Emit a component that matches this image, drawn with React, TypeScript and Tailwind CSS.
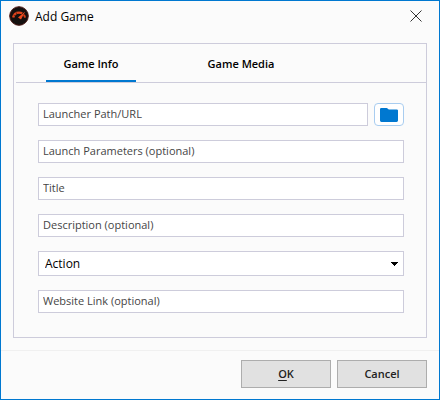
import { useState } from "react";

const tabs = ["Game Info", "Game Media"];

const inputClass =
  "block w-full min-w-0 h-[23px] px-1 pb-0.5 bg-white border border-[#cdccdb] text-[11px] outline-none placeholder:text-[#454545] placeholder:opacity-100";

const footerButtonClass =
  "h-7 w-[90px] border border-[#adadad] bg-[#e1e1e1] text-[11px] font-semibold text-[#222]";

function AppLogo() {
  return (
    <svg width="20" height="20" viewBox="0 0 20 20" fill="none">
      <circle cx="10" cy="10" r="9.3" fill="#14100f" stroke="#4a1613" strokeWidth="1" />
      <path d="M4.2 11.4C4.8 8.4 7.2 6.6 10 6.6c1.3 0 2.3.2 3.2.7" stroke="#e2441c" strokeWidth="2.4" />
      <path d="M14.8 8.8c.7.8 1.1 1.7 1.2 2.8" stroke="#d63d19" strokeWidth="2" />
      <path d="M16.2 5.4l-4.2 8.2-3-2z" fill="#f04a1d" />
      <path d="M7 6.2l1 2.2M4.4 8.8l1.8 1" stroke="#14100f" strokeWidth=".5" />
    </svg>
  );
}

function FolderIcon() {
  return (
    <svg width="18" height="14" viewBox="0 0 18 14" fill="#0078d0">
      <path d="M0 1.2Q0 0 1.2 0H6.6Q7.2 0 7.6.4L8.8 1.4H16.8Q18 1.4 18 2.6V12.6Q18 14 16.6 14H1.4Q0 14 0 12.6Z" />
    </svg>
  );
}

function TextField({ label }: { label: string }) {
  return <input type="text" aria-label={label} placeholder={label} className={inputClass} />;
}

export default function App() {
  const [active, setActive] = useState("Game Info");

  return (
    <div className="flex min-h-screen flex-col border border-[#0078d0] bg-[#fbfbfb] font-['Open_Sans',sans-serif] text-[12px] leading-4 text-black">
      <header className="flex h-[42px] items-start justify-between pl-2 pr-4">
        <div className="flex items-center gap-1.5 pt-[5px]">
          <AppLogo />
          <h1 className="pt-px">Add Game</h1>
        </div>
        <button type="button" aria-label="Close" className="mt-2 p-px">
          <svg width="12" height="12" viewBox="0 0 12 12" stroke="#333" strokeWidth="1">
            <path d="M.5 .5l11 11M11.5 .5l-11 11" />
          </svg>
        </button>
      </header>

      <main className="mx-3 flex-1 border border-[#cdccdb]">
        <div role="tablist" className="ml-0.5 flex h-[39px] gap-[60px] border-b border-[#cdccdb] pl-[30px]">
          {tabs.map((tab) => (
            <button
              key={tab}
              type="button"
              role="tab"
              aria-selected={tab === active}
              onClick={() => setActive(tab)}
              className={`w-[90px] border-b-2 pt-1 text-[11px] font-semibold ${
                tab === active ? "border-[#0078d0]" : "border-transparent"
              }`}
            >
              {tab}
            </button>
          ))}
        </div>

        <form className="flex flex-col gap-3.5 pt-5 pr-[22px] pb-6 pl-6">
          <div className="flex gap-1.5">
            <TextField label="Launcher Path/URL" />
            <button
              type="button"
              aria-label="Browse"
              className="flex h-[23px] w-[30px] shrink-0 items-center justify-center rounded border border-[#a9cdf0] bg-white"
            >
              <FolderIcon />
            </button>
          </div>
          <TextField label="Launch Parameters (optional)" />
          <TextField label="Title" />
          <TextField label="Description (optional)" />
          <div className="relative">
            <select
              aria-label="Category"
              className="block h-[25px] w-full appearance-none border border-[#cdccdb] bg-white px-1.5 outline-none"
            >
              <option>Action</option>
            </select>
            <svg
              className="pointer-events-none absolute top-[11px] right-1.5"
              width="7"
              height="4"
              viewBox="0 0 7 4"
              shapeRendering="crispEdges"
            >
              <path d="M0 0h7v1H6v1H5v1H4v1H3V3H2V2H1V1H0z" />
            </svg>
          </div>
          <TextField label="Website Link (optional)" />
        </form>
      </main>

      <footer className="mt-3 flex justify-end gap-1.5 border-t border-[#f0f0f0] px-3 pt-[9px] pb-[11px]">
        <button type="button" className={footerButtonClass}>
          <span className="underline underline-offset-2">O</span>K
        </button>
        <button type="button" className={footerButtonClass}>
          Cancel
        </button>
      </footer>
    </div>
  );
}
